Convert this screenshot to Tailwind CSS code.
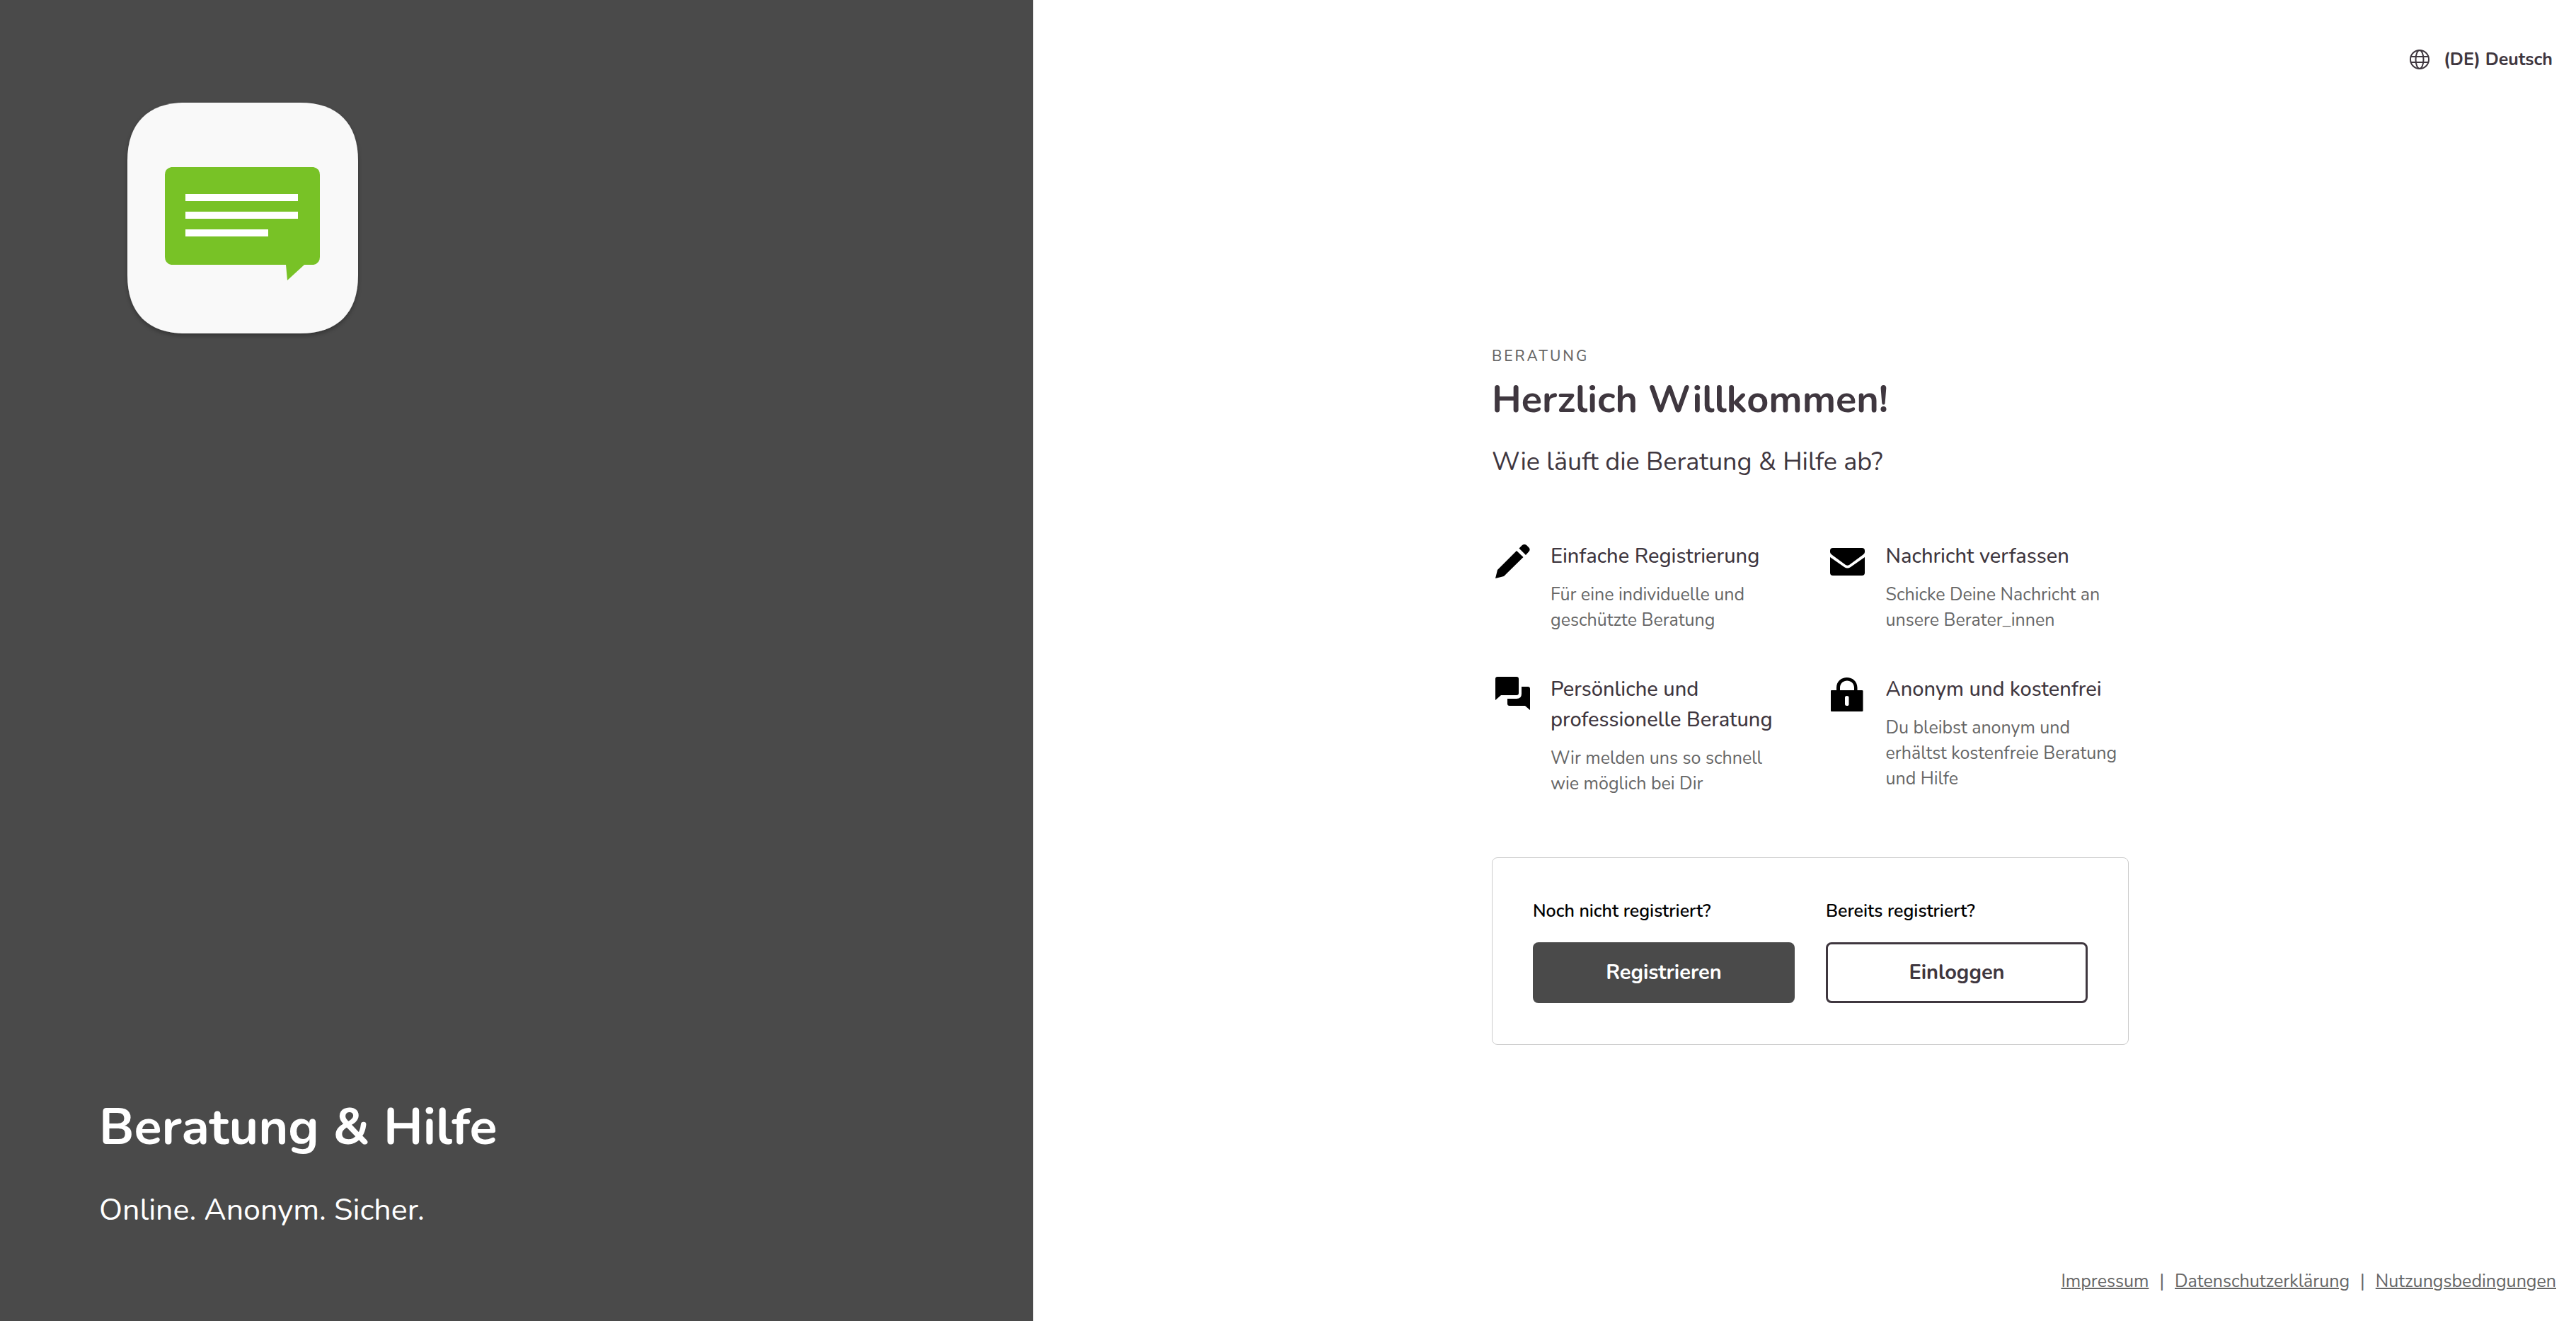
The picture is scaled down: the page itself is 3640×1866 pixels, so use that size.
<!DOCTYPE html>
<html lang="de">
<head>
<meta charset="utf-8">
<meta name="viewport" content="width=device-width, initial-scale=1">
<title>Beratung &amp; Hilfe</title>
<script src="https://cdn.jsdelivr.net/npm/@tailwindcss/browser@4"></script>
</head>
<body class="grid min-h-screen grid-cols-[73fr_109fr] bg-white font-['Nunito','Lato',sans-serif] text-[#3f373f]">

<aside class="flex flex-col justify-between bg-[#4a4a4a] px-[140px] pt-[137px] pb-[129px] text-white">
  <svg class="ml-8 h-[342px] w-[342px]" viewBox="-8 -8 342 342" role="img" aria-label="Beratung &amp; Hilfe">
    <defs><filter id="shade" x="-10%" y="-10%" width="120%" height="120%"><feDropShadow dx="0" dy="3" stdDeviation="3" flood-color="#000" flood-opacity=".3"/></filter></defs>
    <path filter="url(#shade)" fill="#f9f9f9" d="M0 82C0 29 29 0 82 0H244C297 0 326 29 326 82V244C326 297 297 326 244 326H82C29 326 0 297 0 244Z"/>
    <path fill="#78c226" d="M62 91H263Q272 93 272 102V218Q272 227 263 229H250L226 251L224 229H62Q53 227 53 218V102Q53 93 62 91Z"/>
    <path fill="#fff" d="M82 129H241V139H82ZM82 154H241V164H82ZM82 179H199V189H82Z"/>
  </svg>
  <div>
    <h1 class="text-[72px] leading-[88px] font-bold">Beratung &amp; Hilfe</h1>
    <p class="mt-[45px] text-[43px] leading-[56px]">Online. Anonym. Sicher.</p>
  </div>
</aside>

<div class="flex flex-col">
  <header class="flex justify-end pt-[66px] pr-[33px] pb-[69px]">
    <button type="button" class="flex items-center gap-5 text-[25px] leading-9 font-bold">
      <svg class="h-7 w-7" viewBox="0 0 28 28" fill="none" stroke="currentColor" stroke-width="2" aria-hidden="true">
        <circle cx="14" cy="14" r="13"/><ellipse cx="14" cy="14" rx="5.500" ry="13"/><path d="M2 10H26M2 18H26"/>
      </svg>
      (DE) Deutsch
    </button>
  </header>

  <main class="flex flex-1 flex-col items-center justify-center pl-4">
    <div class="w-full max-w-[900px]">
      <p class="text-[21px] leading-8 font-medium tracking-[3px] text-[#666]">BERATUNG</p>
      <h2 class="mt-3 text-[54px] leading-[66px] font-bold">Herzlich Willkommen!</h2>
      <p class="mt-8 text-[36px] leading-[48px]">Wie läuft die Beratung &amp; Hilfe ab?</p>

      <ul class="mt-[87px] grid grid-cols-2 gap-x-[47px] gap-y-[58px]">
        <li class="flex gap-[27px]">
          <svg class="h-14 w-14 shrink-0 text-black" viewBox="-5 -5 56 56" fill="currentColor" aria-hidden="true"><path d="M0 48L3 36L30 9L39.500 18L12 45ZM33.500 5.500L38 1Q41-1 44 1L47 4Q50 7 47.500 10L43 15Z"/></svg>
          <div>
            <h3 class="text-[29px] leading-[43px] font-medium">Einfache Registrierung</h3>
            <p class="mt-[15px] text-[25px] leading-9 text-[#666]">Für eine individuelle und geschützte Beratung</p>
          </div>
        </li>
        <li class="flex gap-[27px]">
          <svg class="h-14 w-14 shrink-0 text-black" viewBox="-4 -10 56 56" fill="currentColor" aria-hidden="true"><path d="M4 0H45Q49 0 49 4V6Q49 8 46 10L27 24Q24.500 25.500 22 24L3 10Q0 8 0 6V4Q0 0 4 0ZM0 13L20 27Q24.500 30 29 27L49 13V35Q49 39 45 39H4Q0 39 0 35Z"/></svg>
          <div>
            <h3 class="text-[29px] leading-[43px] font-medium">Nachricht verfassen</h3>
            <p class="mt-[15px] text-[25px] leading-9 text-[#666]">Schicke Deine Nachricht an unsere Berater_innen</p>
          </div>
        </li>
        <li class="flex gap-[27px]">
          <svg class="h-14 w-14 shrink-0 text-black" viewBox="-5 -4 56 56" fill="currentColor" aria-hidden="true"><path d="M3 0H30Q33 0 33 3V23Q33 26 30 26H8L0 33V3Q0 0 3 0ZM37 14H46Q49 14 49 17V47L42 41H20Q17 41 17 38V31H30Q37 31 37 24Z"/></svg>
          <div>
            <h3 class="text-[29px] leading-[43px] font-medium">Persönliche und professionelle Beratung</h3>
            <p class="mt-[15px] text-[25px] leading-9 text-[#666]">Wir melden uns so schnell wie möglich bei Dir</p>
          </div>
        </li>
        <li class="flex gap-[27px]">
          <svg class="h-14 w-14 shrink-0 text-black" viewBox="-5 -5 56 56" fill="currentColor" aria-hidden="true"><path fill-rule="evenodd" d="M1 18H8V14.500C8-5 37.500-5 37.500 14.500V18H44Q45.500 18 45.500 19V47Q45.500 48 44 48H1Q0 48 0 47V19Q0 18 1 18ZM13 18H33V14.500C33 1 13 1 13 14.500ZM20 28V38Q20 40 22.700 40Q25.500 40 25.500 38V28Q25.500 26 22.700 26Q20 26 20 28Z"/></svg>
          <div>
            <h3 class="text-[29px] leading-[43px] font-medium">Anonym und kostenfrei</h3>
            <p class="mt-[15px] text-[25px] leading-9 text-[#666]">Du bleibst anonym und erhältst kostenfreie Beratung und Hilfe</p>
          </div>
        </li>
      </ul>

      <section class="mt-[86px] grid grid-cols-2 gap-x-11 rounded-lg border border-[#ccc] px-[57px] pt-[57px] pb-[58px] text-black">
        <div>
          <p id="new-user" class="text-[25px] leading-9 font-semibold">Noch nicht registriert?</p>
          <button type="button" aria-describedby="new-user" class="mt-[26px] h-[86px] w-full rounded-lg bg-[#4a4a4a] text-[29px] font-bold text-white">Registrieren</button>
        </div>
        <div>
          <p id="known-user" class="text-[25px] leading-9 font-semibold">Bereits registriert?</p>
          <button type="button" aria-describedby="known-user" class="mt-[26px] h-[86px] w-full rounded-lg border-3 border-[#3f373f] text-[29px] font-bold text-[#3f373f]">Einloggen</button>
        </div>
      </section>
    </div>
  </main>

  <footer class="flex justify-end gap-[15px] pr-7 pb-[38px] text-[25px] leading-9 text-[#666]">
    <a href="#" class="underline decoration-2">Impressum</a><span>|</span>
    <a href="#" class="underline decoration-2">Datenschutzerklärung</a><span>|</span>
    <a href="#" class="underline decoration-2">Nutzungsbedingungen</a>
  </footer>
</div>
</body>
</html>
